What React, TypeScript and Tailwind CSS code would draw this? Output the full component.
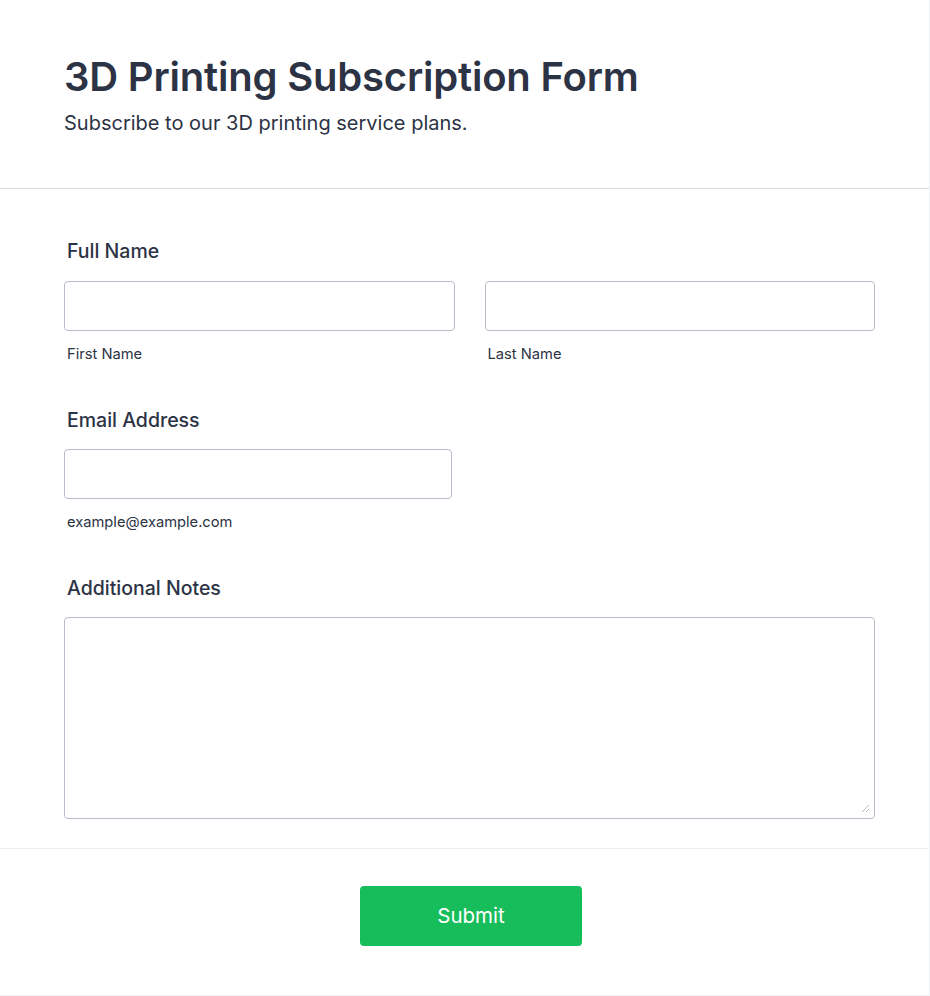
import React from "react";

export default function App() {
  return (
    <div
      className="w-[930px] min-h-[996px] bg-white text-[#2c3345]"
      style={{ fontFamily: "Inter, 'Noto Sans', sans-serif" }}
    >
      <div className="w-[930px] h-[996px] border-r border-b border-[#f1f2f6] flex flex-col">
        {/* Header */}
        <div className="pl-[64px] pr-[54px] pt-[53px] pb-[51px] border-b border-[#d8dae6]">
          <h1 className="text-[40px] leading-[48px] font-semibold text-[#2c3345] tracking-[-0.2px]">
            3D Printing Subscription Form
          </h1>
          <p className="mt-[8px] text-[20px] leading-[28px] font-normal text-[#2c3345]">
            Subscribe to our 3D printing service plans.
          </p>
        </div>

        {/* Body */}
        <div className="pl-[64px] pr-[54px] pt-[48px] pb-[29px] border-b border-[#eceef3] flex flex-col">
          {/* Full name */}
          <label className="pl-[3px] text-[19.5px] leading-[28px] font-medium text-[#2c3345]">
            Full Name
          </label>
          <div className="mt-[16px] grid grid-cols-2 gap-[30px]">
            <div className="flex flex-col">
              <input className="h-[50px] w-full rounded-[4px] border border-[#b8bdc9] bg-white outline-none" />
              <span className="mt-[13px] pl-[3px] text-[14.7px] leading-[20px] text-[#2c3345]">First Name</span>
            </div>
            <div className="flex flex-col">
              <input className="h-[50px] w-full rounded-[4px] border border-[#b8bdc9] bg-white outline-none" />
              <span className="mt-[13px] pl-[3px] text-[14.7px] leading-[20px] text-[#2c3345]">Last Name</span>
            </div>
          </div>

          {/* Email */}
          <label className="mt-[42px] pl-[3px] text-[19.5px] leading-[28px] font-medium text-[#2c3345]">
            Email Address
          </label>
          <input className="mt-[15px] h-[50px] w-[388px] rounded-[4px] border border-[#b8bdc9] bg-white outline-none" />
          <span className="mt-[13px] pl-[3px] text-[14.7px] leading-[20px] text-[#2c3345]">example@example.com</span>

          {/* Notes */}
          <label className="mt-[42px] pl-[3px] text-[19.5px] leading-[28px] font-medium text-[#2c3345]">
            Additional Notes
          </label>
          <div className="relative mt-[15px]">
            <textarea className="block h-[202px] w-full resize-none rounded-[4px] border border-[#b8bdc9] bg-white outline-none" />
            <svg
              className="absolute right-[5px] bottom-[6px]"
              width="9"
              height="9"
              viewBox="0 0 9 9"
            >
              <path d="M8 1 L1 8 M8 5 L5 8" stroke="#b8bdc9" strokeWidth="1" />
            </svg>
          </div>
        </div>

        {/* Footer */}
        <div className="flex justify-center pt-[37px] pl-[13px]">
          <button className="w-[222px] h-[60px] rounded-[4px] bg-[#18bd5b] text-white text-[20.5px] font-normal">
            Submit
          </button>
        </div>
      </div>
    </div>
  );
}
